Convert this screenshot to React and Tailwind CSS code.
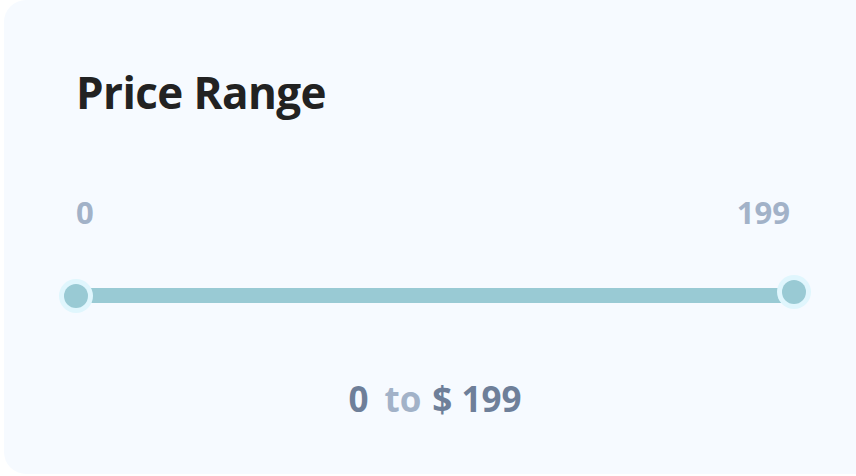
import React from "react";

export default function App() {
  const min = 0;
  const max = 199;

  return (
    <div className="w-[856px] h-[476px] bg-white pl-[4px] overflow-hidden" style={{ fontFamily: '"Open Sans", "Noto Sans", sans-serif' }}>
      <div className="h-[474px] w-[880px] rounded-[22px] bg-[#f6faff] pl-[72px] pr-[94px] pt-[64px]">
        <h2 className="text-[44px] font-bold leading-[56px] tracking-[-0.6px] text-[#222222]">Price Range</h2>

        <div className="mt-[74px] flex justify-between text-[31px] font-bold leading-[36px] text-[#a2b2c8]">
          <span>{min}</span>
          <span>{max}</span>
        </div>

        <div className="relative mt-[48px] h-[34px] -ml-[17px] -mr-[21px]">
          <div className="absolute left-[17px] right-[18px] top-[10px] h-[15px] bg-[#99cad4]" />
          <div className="absolute left-0 top-[1px] h-[34px] w-[34px] rounded-full bg-[#e0f6fd] p-[5px]">
            <div className="h-full w-full rounded-full bg-[#99cad4]" />
          </div>
          <div className="absolute right-0 top-[-3px] h-[34px] w-[34px] rounded-full bg-[#e0f6fd] p-[5px]">
            <div className="h-full w-full rounded-full bg-[#99cad4]" />
          </div>
        </div>

        <div className="mt-[63px] flex items-baseline justify-center pl-[4px] text-[35px] font-bold leading-[48px] text-[#6e7f99]">
          <span>{min}</span>
          <span className="ml-[16px] text-[#a2b2c8]">to</span>
          <span className="ml-[11px]">$ {max}</span>
        </div>
      </div>
    </div>
  );
}
